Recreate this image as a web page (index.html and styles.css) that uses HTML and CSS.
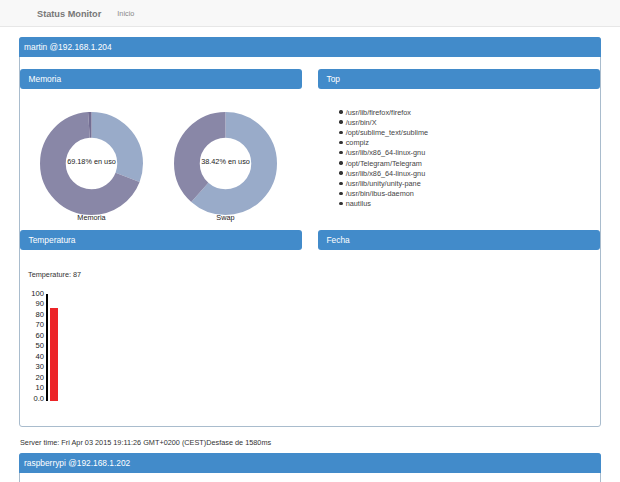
FILE: index.html
```html
<!DOCTYPE html>
<html lang="es">
<head>
<meta charset="utf-8">
<title>Status Monitor</title>
<link rel="stylesheet" href="styles.css">
</head>
<body>
<nav class="navbar">
  <span class="brand">Status Monitor</span>
  <a class="nav-link">Inicio</a>
</nav>
<main class="container">
  <section class="panel">
    <div class="panel-heading">martin @192.168.1.204</div>
    <div class="panel-body">
      <div class="sub">
        <div class="sub-heading">Memoria</div>
        <div class="sub-body mem">
          <figure class="donut">
            <svg width="103" height="103" viewBox="0 0 103 103">
              <g transform="rotate(-90 51.5 51.5)" fill="none" stroke-width="25.75">
                <circle cx="51.5" cy="51.5" r="38.625" pathLength="100" stroke="#99abc9" stroke-dasharray="30.82 100" stroke-dashoffset="0"/>
                <circle cx="51.5" cy="51.5" r="38.625" pathLength="100" stroke="#8987a7" stroke-dasharray="68.1 100" stroke-dashoffset="-30.82"/>
                <circle cx="51.5" cy="51.5" r="38.625" pathLength="100" stroke="#736d92" stroke-dasharray="1.08 100" stroke-dashoffset="-98.92"/>
              </g>
              <text x="51.5" y="52.3" text-anchor="middle" class="donut-text">69.18% en uso</text>
            </svg>
            <figcaption>Memoria</figcaption>
          </figure>
          <figure class="donut">
            <svg width="103" height="103" viewBox="0 0 103 103">
              <g transform="rotate(-90 51.5 51.5)" fill="none" stroke-width="25.75">
                <circle cx="51.5" cy="51.5" r="38.625" pathLength="100" stroke="#99abc9" stroke-dasharray="61.58 100" stroke-dashoffset="0"/>
                <circle cx="51.5" cy="51.5" r="38.625" pathLength="100" stroke="#8987a7" stroke-dasharray="38.42 100" stroke-dashoffset="-61.58"/>
              </g>
              <text x="51.5" y="52.3" text-anchor="middle" class="donut-text">38.42% en uso</text>
            </svg>
            <figcaption>Swap</figcaption>
          </figure>
        </div>
      </div>
      <div class="sub">
        <div class="sub-heading">Top</div>
        <div class="sub-body top">
          <ul class="proc-list">
            <li>/usr/lib/firefox/firefox</li>
            <li>/usr/bin/X</li>
            <li>/opt/sublime_text/sublime</li>
            <li>compiz</li>
            <li>/usr/lib/x86_64-linux-gnu</li>
            <li>/opt/Telegram/Telegram</li>
            <li>/usr/lib/x86_64-linux-gnu</li>
            <li>/usr/lib/unity/unity-pane</li>
            <li>/usr/bin/ibus-daemon</li>
            <li>nautilus</li>
          </ul>
        </div>
      </div>
      <div class="sub">
        <div class="sub-heading">Temperatura</div>
        <div class="sub-body temp">
          <div class="temp-text">Temperature: 87</div>
          <div class="chart">
            <div class="ticks">
              <span>100</span><span>90</span><span>80</span><span>70</span><span>60</span><span>50</span><span>40</span><span>30</span><span>20</span><span>10</span><span>0.0</span>
            </div>
            <div class="plot">
              <div class="axis"></div>
              <div class="bar" style="height:87%"></div>
            </div>
          </div>
        </div>
      </div>
      <div class="sub">
        <div class="sub-heading">Fecha</div>
        <div class="sub-body"></div>
      </div>
    </div>
  </section>
  <p class="server-time">Server time: Fri Apr 03 2015 19:11:26 GMT+0200 (CEST)Desfase de 1580ms</p>
  <section class="panel">
    <div class="panel-heading">raspberrypi @192.168.1.202</div>
    <div class="panel-body panel-body-empty"></div>
  </section>
</main>
</body>
</html>
```
FILE: styles.css
```css
* { box-sizing: border-box; }

body {
  margin: 0;
  font-family: "Liberation Sans", Arial, sans-serif;
  font-size: 7.3px;
  line-height: 10px;
  color: #333;
  background: #fff;
}

.navbar {
  height: 27px;
  background: #f8f8f8;
  border-bottom: 1px solid #e7e7e7;
  display: flex;
  align-items: center;
  padding: 2px 0 0 37px;
  gap: 16px;
}

.brand {
  font-size: 9.2px;
  font-weight: bold;
  color: #777;
}

.nav-link {
  font-size: 7.3px;
  color: #888;
}

.container {
  padding: 10px 19px 0 19px;
}

.panel {
  border: 1px solid #a9bccd;
  border-radius: 3px;
  background: #fff;
}

.panel-heading {
  margin: -1px -1px 0 -1px;
  height: 20px;
  background: #428bca;
  color: #fff;
  font-size: 8.4px;
  line-height: 20px;
  padding-left: 5px;
  border-radius: 3px 3px 0 0;
}

.panel-body {
  padding-top: 12px;
  display: grid;
  grid-template-columns: 282px 282px;
  column-gap: 16px;
}

.panel-body-empty {
  min-height: 40px;
}

.sub-heading {
  height: 20px;
  background: #428bca;
  color: #fff;
  font-size: 8.4px;
  line-height: 20px;
  padding-left: 8.5px;
  border-radius: 3px;
}

.sub-body {
  min-height: 141px;
}

.mem {
  display: flex;
  gap: 31px;
  padding: 23px 0 0 20px;
}

.donut {
  margin: 0;
  display: flex;
  flex-direction: column;
  align-items: center;
  width: 103px;
}

.donut svg {
  display: block;
}

.donut-text {
  font-family: "Liberation Sans", Arial, sans-serif;
  font-size: 7.3px;
  fill: #222;
}

.donut figcaption {
  margin-top: -2.5px;
  line-height: 10px;
  color: #222;
}

.top {
  padding-top: 18.6px;
}

.proc-list {
  list-style: none;
  margin: 0;
  padding: 0 0 0 21.3px;
  line-height: 10.2px;
  color: #444;
}

.proc-list li::before {
  content: "";
  display: inline-block;
  width: 3.4px;
  height: 3.4px;
  border-radius: 50%;
  background: #333;
  margin-right: 3px;
  vertical-align: 1px;
}

.temp {
  min-height: 176px;
  padding: 20px 0 0 8px;
}

.temp-text {
  line-height: 10px;
}

.chart {
  margin-top: 8.75px;
  display: flex;
  align-items: flex-start;
}

.ticks {
  width: 16px;
  display: flex;
  flex-direction: column;
  text-align: right;
  font-size: 7.6px;
  line-height: 10.5px;
  color: #222;
}

.plot {
  margin: 5px 0 0 1.5px;
  height: 107px;
  display: flex;
  align-items: flex-end;
  gap: 2px;
}

.axis {
  align-self: stretch;
  width: 2.6px;
  background: #000;
}

.bar {
  width: 8.3px;
  background: #ec2427;
}

.server-time {
  margin: 10.5px 0 5.3px 1px;
  line-height: 10px;
}
```
